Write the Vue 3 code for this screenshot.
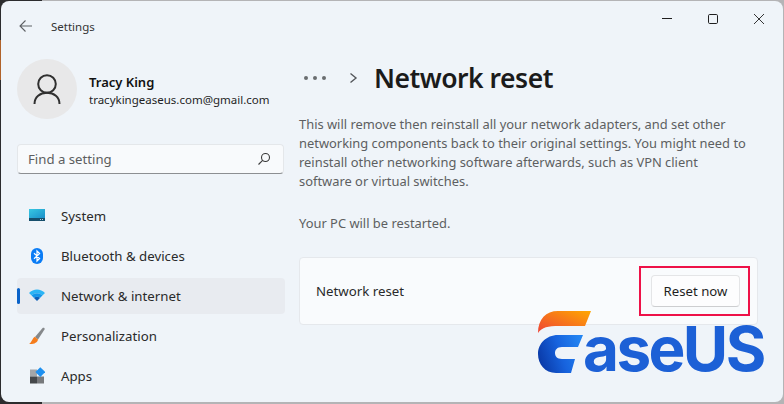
<script setup>
const navItems = [
  { label: 'System', icon: 'system' },
  { label: 'Bluetooth & devices', icon: 'bluetooth' },
  { label: 'Network & internet', icon: 'wifi', active: true },
  { label: 'Personalization', icon: 'brush' },
  { label: 'Apps', icon: 'apps' }
]
</script>

<template>
  <div class="desktop">
    <div class="window">
      <header class="titlebar">
        <svg class="back" width="14" height="14" viewBox="0 0 14 14" fill="none" stroke="#5f6266" stroke-width="1.1">
          <path d="M1 7H13M6.5 1.5L1 7L6.5 12.5" />
        </svg>
        <span class="app-name">Settings</span>
        <div class="controls">
          <svg width="12" height="12" viewBox="0 0 12 12" fill="none" stroke="#1f1f1f" stroke-width="1"><path d="M1 5.5H11" /></svg>
          <svg width="12" height="12" viewBox="0 0 12 12" fill="none" stroke="#1f1f1f" stroke-width="1"><rect x="1.5" y="1.5" width="9" height="9" rx="1.2" /></svg>
          <svg width="12" height="12" viewBox="0 0 12 12" fill="none" stroke="#1f1f1f" stroke-width="0.9"><path d="M1 1L11 11M11 1L1 11" /></svg>
        </div>
      </header>

      <div class="columns">
        <aside class="sidebar">
          <div class="profile">
            <div class="avatar">
              <svg width="28" height="31" viewBox="0 0 28 31" fill="none" stroke="#303030" stroke-width="2">
                <circle cx="14" cy="10" r="8.8" />
                <path d="M1.5 30C1.5 23 7 18.8 14 18.8C21 18.8 26.5 23 26.5 30" />
              </svg>
            </div>
            <div class="who">
              <div class="name">Tracy King</div>
              <div class="email">tracykingeaseus.com@gmail.com</div>
            </div>
          </div>

          <div class="search">
            <span class="placeholder">Find a setting</span>
            <svg width="14" height="14" viewBox="0 0 14 14" fill="none" stroke="#3a3a3a" stroke-width="1.1">
              <circle cx="8.5" cy="5.5" r="4" />
              <path d="M5.6 8.4L1.5 12.5" />
            </svg>
          </div>

          <nav class="nav">
            <div v-for="item in navItems" :key="item.label" class="nav-item" :class="{ active: item.active }">
              <span v-if="item.active" class="marker"></span>
              <svg class="nav-icon" width="16" height="18" viewBox="0 0 16 18">
                <template v-if="item.icon === 'system'">
                  <defs>
                    <linearGradient id="sys" x1="0" y1="0" x2="1" y2="1">
                      <stop offset="0" stop-color="#38c8e2" />
                      <stop offset="1" stop-color="#1a8fc9" />
                    </linearGradient>
                  </defs>
                  <rect x="0" y="2" width="16" height="9" fill="url(#sys)" />
                  <rect x="0" y="11" width="16" height="3" fill="#174f6c" />
                  <rect x="11" y="12" width="1" height="1" fill="#b9d6e2" />
                  <rect x="13" y="12" width="1" height="1" fill="#b9d6e2" />
                </template>
                <template v-else-if="item.icon === 'bluetooth'">
                  <rect x="2" y="1" width="12" height="16" rx="6" fill="#0a7cf5" />
                  <path d="M5 6.2L10.6 11.4L8 14V4L10.6 6.6L5 11.8" fill="none" stroke="#fff" stroke-width="1.2" />
                </template>
                <template v-else-if="item.icon === 'wifi'">
                  <path d="M0 6C4.2 1.3 11.8 1.3 16 6L13.4 8.5C10.2 5.5 5.8 5.5 2.6 8.5Z" fill="#2cb5f5" />
                  <path d="M2.6 8.5C5.8 5.5 10.2 5.5 13.4 8.5L11 10.9C9.3 9.5 6.7 9.5 5 10.9Z" fill="#1597ea" />
                  <path d="M5 10.9C6.7 9.5 9.3 9.5 11 10.9L8 14Z" fill="#0b5fb8" />
                </template>
                <template v-else-if="item.icon === 'brush'">
                  <path d="M6 10L13.6 1C14.6 0 16.2 1.2 15.5 2.4L9 12.4Z" fill="#85888b" />
                  <path d="M5.8 9.8L9 12.4C8.5 15.4 5 17.4 0 17C2.4 16 3 11.8 5.8 9.8Z" fill="#f57c1c" />
                </template>
                <template v-else>
                  <rect x="1" y="2.5" width="7" height="7" fill="#a3a6a9" />
                  <rect x="1" y="9.5" width="7" height="7" fill="#45484b" />
                  <rect x="8" y="9.5" width="7" height="7" fill="#77797c" />
                  <rect x="7.8" y="1.6" width="7" height="7" transform="rotate(45 11.3 5.1)" fill="#1e90f0" />
                </template>
              </svg>
              <span class="nav-label">{{ item.label }}</span>
            </div>
          </nav>
        </aside>

        <main class="content">
          <div class="crumbs">
            <span class="dots"><i></i><i></i><i></i></span>
            <svg width="9" height="12" viewBox="0 0 9 12" fill="none" stroke="#55585c" stroke-width="1.4"><path d="M1.5 1.5L7 6L1.5 10.5" /></svg>
            <h1>Network reset</h1>
          </div>
          <p class="desc">This will remove then reinstall all your network adapters, and set other networking components back to their original settings. You might need to reinstall other networking software afterwards, such as VPN client software or virtual switches.</p>
          <p class="restart">Your PC will be restarted.</p>
          <section class="card">
            <span class="card-label">Network reset</span>
            <div class="highlight">
              <button class="reset">Reset now</button>
            </div>
          </section>
        </main>
      </div>

      <div class="logo">
        <svg width="54" height="64" viewBox="0 0 54 64">
          <defs>
            <linearGradient id="swoosh" x1="0" y1="1" x2="1" y2="0">
              <stop offset="0" stop-color="#ee4236" />
              <stop offset="1" stop-color="#ffa800" />
            </linearGradient>
            <linearGradient id="cmark" x1="0" y1="0.6" x2="1" y2="0.3">
              <stop offset="0" stop-color="#0a3aa8" />
              <stop offset="0.5" stop-color="#1763de" />
              <stop offset="1" stop-color="#2385f2" />
            </linearGradient>
          </defs>
          <path d="M0 22C0 8 8 0 20 0H53L47 15H21C10 15 4 16 0 22Z" fill="url(#swoosh)" />
          <path d="M20 24H45L40 36H24C19 36 17 39 17 42C17 45 19 48 24 48H37L33 62H18C7 62 0 53 0 43C0 33 8 24 20 24Z" fill="url(#cmark)" />
        </svg>
        <span class="logo-text">aseUS</span>
      </div>
    </div>
  </div>
</template>

<style>
html, body { margin: 0; padding: 0; }
</style>

<style scoped>
.desktop {
  width: 784px;
  height: 404px;
  box-sizing: border-box;
  padding: 1px 1px 2px 1px;
  overflow: hidden;
  background:
    linear-gradient(#b0622a, #b0622a) 0 40px / 1px 40px no-repeat,
    linear-gradient(#2c2c2e, #2c2c2e) 0 0 / 42px 100% no-repeat,
    linear-gradient(#b4b4b6, #b4b4b6) 0 0 / 100% 100% no-repeat;
  font-family: "Noto Sans", "Open Sans", sans-serif;
}
.window {
  position: relative;
  width: 782px;
  height: 401px;
  overflow: hidden;
  border-radius: 8px;
  background: #eff4f9;
  color: #1b1b1b;
}
.titlebar {
  display: flex;
  align-items: flex-start;
  height: 36px;
  padding: 0 12px 0 18px;
}
.back { margin-top: 18px; }
.app-name {
  margin-left: 18px;
  font-size: 11.5px;
  line-height: 16px;
  color: #333;
  margin-top: 18px;
}
.controls {
  margin-left: auto;
  display: flex;
  gap: 34px;
  margin-top: 12px;
  margin-right: 6px;
}
.columns { display: flex; }
.sidebar { width: 298px; flex: none; padding-left: 16px; box-sizing: border-box; }
.profile { display: flex; align-items: center; margin-top: 22px; gap: 12px; }
.avatar {
  width: 60px;
  height: 60px;
  border-radius: 50%;
  background: #e8e8e9;
  display: flex;
  align-items: center;
  justify-content: center;
}
.who { margin-top: 4px; }
.name { font-size: 13px; font-weight: 600; color: #111; line-height: 18px; }
.email { font-size: 11.5px; color: #1f1f1f; line-height: 18px; }
.search {
  margin-top: 25px;
  width: 267px;
  height: 30px;
  box-sizing: border-box;
  padding: 0 12px 0 10px;
  display: flex;
  align-items: center;
  justify-content: space-between;
  background: #f8fafc;
  border: 1px solid #e4e7ea;
  border-bottom-color: #8c8f92;
  border-radius: 4px;
}
.placeholder { font-size: 13.2px; color: #5c5e60; line-height: 26px; }
.nav { margin-top: 24px; display: flex; flex-direction: column; gap: 4px; width: 268px; }
.nav-item {
  position: relative;
  display: flex;
  align-items: center;
  height: 36px;
  padding-left: 12px;
  border-radius: 4px;
}
.nav-item.active { background: #e8ebf0; }
.marker {
  position: absolute;
  left: 0;
  top: 10px;
  width: 3px;
  height: 16px;
  border-radius: 2px;
  background: #0a63c9;
}
.nav-icon { flex: none; }
.nav-label { margin-left: 16px; font-size: 13.25px; line-height: 18px; color: #2a2a2a; }
.content { flex: 1; min-width: 0; padding-right: 25px; }
.crumbs { display: flex; align-items: center; height: 36px; margin-top: 23px; }
.dots { display: inline-flex; gap: 5px; margin-left: 5px; margin-right: 23px; }
.dots i { width: 4px; height: 4px; border-radius: 50%; background: #6a6d70; display: block; }
h1 { margin: 0 0 0 16px; font-size: 26.5px; letter-spacing: -0.5px; font-weight: 600; color: #1b1b1b; line-height: 36px; }
.desc {
  margin: 19px 0 0;
  max-width: 453px;
  font-size: 12.9px;
  line-height: 19px;
  color: #5d5f61;
}
.restart { margin: 23px 0 0; font-size: 12.9px; line-height: 19px; color: #5d5f61; }
.card {
  margin-top: 24px;
  height: 68px;
  box-sizing: border-box;
  display: flex;
  align-items: center;
  justify-content: space-between;
  padding: 0 7px 0 16px;
  background: #f9fbfd;
  border: 1px solid #e5e8ec;
  border-radius: 4px;
}
.card-label { font-size: 13.25px; color: #2a2a2a; }
.highlight {
  border: 2px solid #ee1148;
  box-sizing: border-box;
  width: 111px;
  height: 50px;
  padding-left: 2px;
  display: flex;
  align-items: center;
  justify-content: center;
}
.reset {
  width: 89px;
  height: 32px;
  background: #fdfdfe;
  border: 1px solid #e4e5e7;
  border-bottom-color: #cdced0;
  border-radius: 4px;
  font: 13.2px "Noto Sans", "Open Sans", sans-serif;
  color: #1f1f1f;
  padding: 0;
}
.logo {
  position: absolute;
  left: 537px;
  top: 310px;
  display: flex;
  align-items: flex-end;
}
.logo svg { display: block; }
.logo-text {
  font-family: Inter, sans-serif;
  font-weight: 700;
  font-size: 62px;
  line-height: 62px;
  letter-spacing: -2.6px;
  color: #1c60d6;
  margin-left: -9px;
  margin-bottom: -5px;
}
</style>
